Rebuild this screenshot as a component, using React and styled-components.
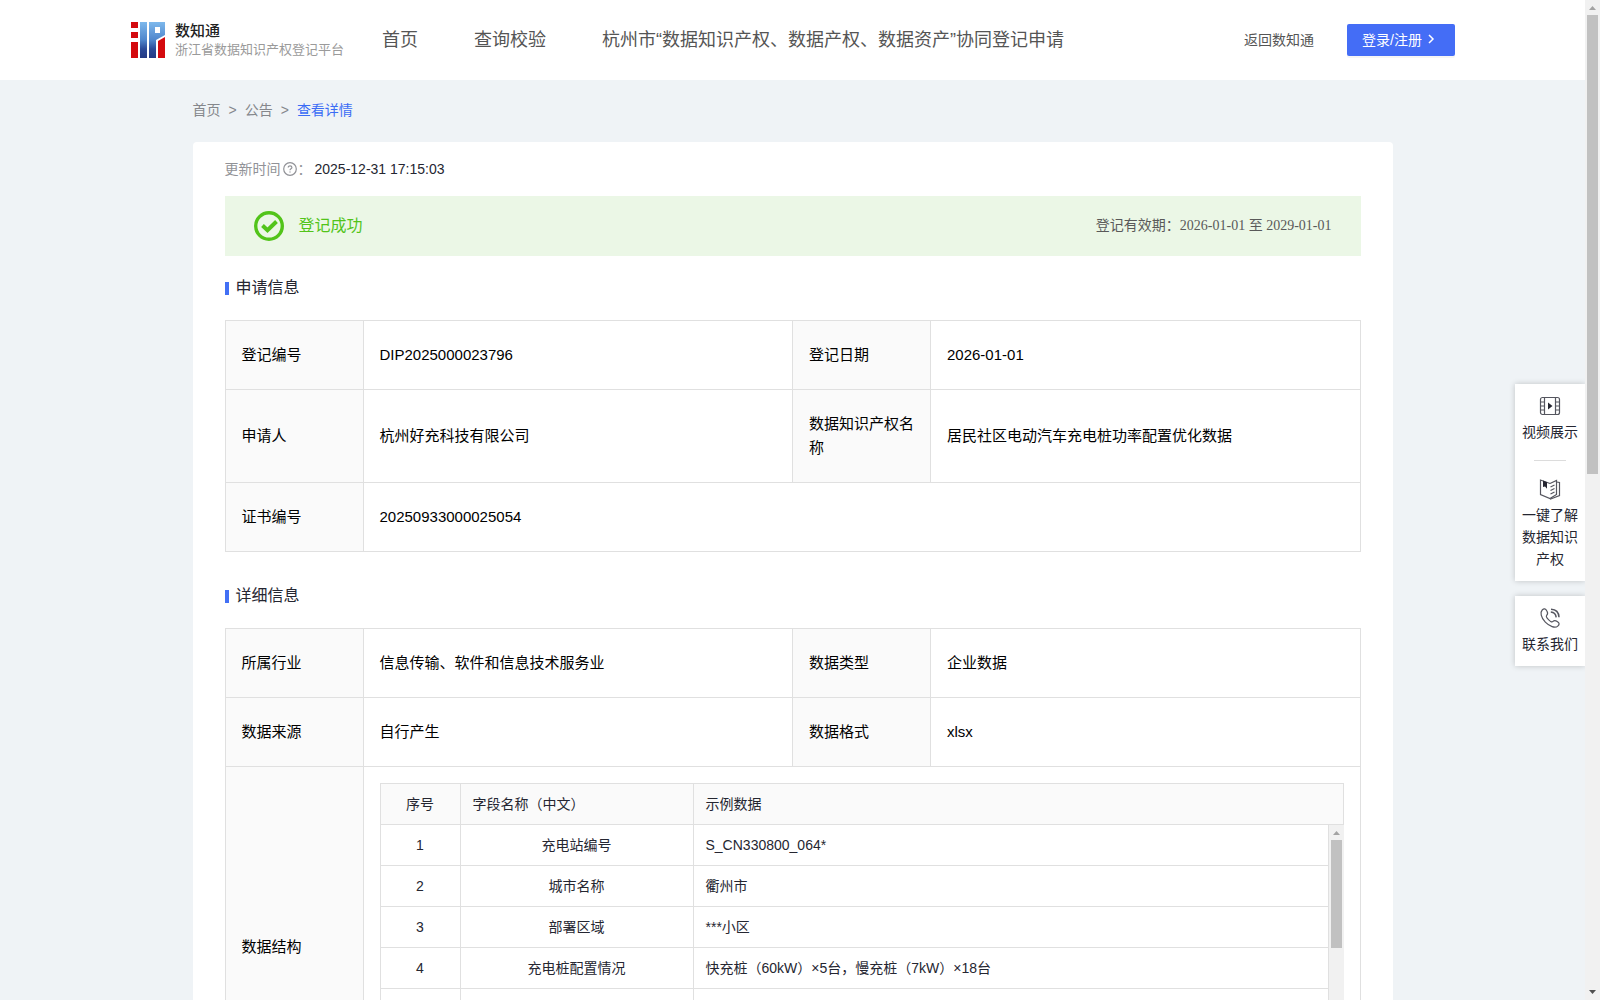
import React from 'react'
import styled, {createGlobalStyle} from 'styled-components'

const sans = `'Liberation Sans', 'Noto Sans CJK SC', sans-serif`
const serif = `'Liberation Serif', 'Noto Sans CJK SC', serif`

const GlobalStyle = createGlobalStyle`
  * {
    box-sizing: border-box;
  }

  body {
    margin: 0;
    background: #eff3f6;
    color: #252631;
    font-family: ${sans};
    font-size: 14px;
    line-height: 22px;
  }
`

const Frame = styled.div`
  position: relative;
  display: flex;
  height: 100vh;
  overflow: hidden;
`

const Page = styled.div`
  flex: 1;
  min-width: 0;
  overflow-y: auto;
  scrollbar-width: none;
`

/* scrollbar */

const Bar = styled.div`
  display: flex;
  flex-direction: column;
  flex: none;
  width: 15px;
  background: #f1f1f1;

  svg {
    display: block;
    flex: none;
  }
`

const Track = styled.div`
  flex: 1;
  padding: 0 2px;
`

const Thumb = styled.div`
  height: ${props => props.$size};
  background: #c1c1c1;
`

const Scrollbar = ({size}) => (
  <Bar aria-hidden="true">
    <svg width="15" height="15"><path d="M4 10h7L7.500 6z" fill="#a3a3a3" /></svg>
    <Track>
      <Thumb $size={size} />
    </Track>
    <svg width="15" height="15"><path d="M4 5h7L7.500 9z" fill="#505050" /></svg>
  </Bar>
)

/* header */

const Header = styled.header`
  display: flex;
  align-items: center;
  height: 80px;
  padding: 0 130px;
  background: #fff;
`

const Brand = styled.a`
  display: flex;
  align-items: center;
  gap: 9px;
  color: #9a9a9a;
  font-size: 13px;
  line-height: 19px;
  text-decoration: none;
  white-space: nowrap;

  strong {
    display: block;
    color: #222;
    font-size: 15px;
    font-weight: 500;
  }
`

const Nav = styled.nav`
  display: flex;
  flex: 1;
  gap: 56px;
  margin-left: 38px;
`

const NavLink = styled.a`
  color: #555;
  font-size: 18px;
  line-height: 24px;
  text-decoration: none;
  white-space: nowrap;
`

const BackLink = styled.a`
  margin-right: 33px;
  color: #555;
  text-decoration: none;
`

const LoginButton = styled.button`
  display: flex;
  align-items: center;
  gap: 4px;
  width: 108px;
  height: 32px;
  padding: 0 15px 2px;
  border: 0;
  border-radius: 2px;
  background: #446df6;
  box-shadow: 0 2px 0 rgba(0, 0, 0, 0.04);
  color: #fff;
  font-family: inherit;
  font-size: 14px;
  white-space: nowrap;
`

/* content */

const Main = styled.main`
  max-width: 1200px;
  margin: 0 auto;
`

const Breadcrumb = styled.nav`
  display: flex;
  gap: 8px;
  padding: 19px 0 21px;
  color: #85878c;

  a {
    color: inherit;
    text-decoration: none;
  }

  a[aria-current] {
    color: #3b6cf5;
  }
`

const Card = styled.div`
  padding: 16px 32px 32px;
  border-radius: 4px;
  background: #fff;
`

const UpdateTime = styled.div`
  display: flex;
  align-items: center;
  color: #919297;

  svg {
    margin: 0 1px 0 2px;
  }

  time {
    margin-left: 3px;
    color: #252631;
  }
`

const Banner = styled.div`
  display: flex;
  align-items: center;
  height: 60px;
  margin: 16px 0 26px;
  padding: 0 29px;
  background: #ebf7e6;
`

const Status = styled.span`
  flex: 1;
  margin-left: 15px;
  color: #52c41a;
  font-size: 16px;
`

const Validity = styled.span`
  color: #595959;
  font-family: ${serif};
`

const SectionTitle = styled.h2`
  display: flex;
  align-items: center;
  gap: 7px;
  height: 12px;
  margin: 0 0 26px;
  font-size: 16px;
  font-weight: 400;

  &::before {
    content: '';
    width: 4px;
    height: 13px;
    background: #4270f5;
  }
`

const InfoTable = styled.table`
  width: 100%;
  margin-bottom: 38px;
  border: solid #e0e0e0;
  border-width: 1px 0 0 1px;
  border-spacing: 0;
  table-layout: fixed;
  color: #000;
  font-size: 15px;
  line-height: 24px;
`

const Label = styled.th`
  width: 138px;
  padding: 22px 16px;
  border: solid #e0e0e0;
  border-width: 0 1px 1px 0;
  background: #fafafa;
  font-weight: 400;
  text-align: left;
`

const Value = styled.td`
  padding: ${props => (props.$nested ? '16px' : '22px 16px')};
  border: solid #e0e0e0;
  border-width: 0 1px 1px 0;
`

const Fields = styled.div`
  border: solid #e0e0e0;
  border-width: 1px 0 0 1px;
  color: #252631;
  font-size: 14px;
  line-height: 22px;
`

const FieldsBody = styled.div`
  display: flex;
  height: 286px;
`

const FieldsScroll = styled.div`
  flex: 1;
  min-width: 0;
  overflow: hidden;
`

const FieldTable = styled.table`
  width: 100%;
  border-spacing: 0;
  table-layout: fixed;

  th,
  td {
    height: 41px;
    padding: 0 12px;
    border: solid #e0e0e0;
    border-width: 0 1px 1px 0;
    font-weight: 400;
    text-align: left;
  }

  th {
    background: #fafafa;
  }

  th:first-child,
  td:not(:last-child) {
    text-align: center;
  }
`

/* floating tools */

const Tools = styled.aside`
  position: absolute;
  top: 384px;
  right: 15px;
  display: flex;
  flex-direction: column;
  gap: 15px;
  width: 70px;
`

const ToolBox = styled.div`
  padding: 11px 7px;
  background: #fff;
  box-shadow: 0 0 6px rgba(0, 0, 0, 0.2);
  clip-path: inset(-10px 0 -10px -10px);
`

const Tool = styled.a`
  display: flex;
  flex-direction: column;
  align-items: center;
  gap: 4px;
  color: #252631;
  text-align: center;
  text-decoration: none;
`

const Divider = styled.hr`
  width: 32px;
  height: 1px;
  margin: 17px auto;
  border: 0;
  background: #dcdcdc;
`

const Logo = () => (
  <svg width="36" height="38" viewBox="0 0 36 38">
    <defs>
      <linearGradient id="blue" x1="0" y1="0" x2="0" y2="1">
        <stop offset="0" stopColor="#7db8ec" />
        <stop offset="0.5" stopColor="#4f86cc" />
        <stop offset="0.75" stopColor="#2b4a98" />
        <stop offset="1" stopColor="#243a84" />
      </linearGradient>
    </defs>
    <path d="M1 1h7v6H1zM1 11h7v6H1zM1 21h7v16H1zM28 20l7-4v21h-7z" fill="#d40a0e" />
    <path d="M10 1h7v36h-7zM19 1h16v13l-9 5v18h-7zM25 6v6h5V6z" fill="url(#blue)" fillRule="evenodd" />
  </svg>
)

const HelpIcon = () => (
  <svg width="14" height="14" viewBox="0 0 14 14" fill="none" stroke="#919297">
    <circle cx="7" cy="7" r="6.300" strokeWidth="1.200" />
    <path d="M5.200 5.500c0-2.300 3.700-2.300 3.700 0C8.900 6.900 7 6.800 7 8.300" strokeWidth="1.200" />
    <path d="M7 9.400v1.200" strokeWidth="1.300" />
  </svg>
)

const SuccessIcon = () => (
  <svg width="30" height="30" viewBox="0 0 30 30" fill="none" stroke="#52c41a">
    <circle cx="15" cy="15" r="13.300" strokeWidth="3.400" />
    <path d="M8.500 14.500l5 4.700 9-8.700" strokeWidth="4" />
  </svg>
)

const VideoIcon = () => (
  <svg width="22" height="22" viewBox="0 0 22 22" fill="none" stroke="#55565f">
    <rect x="1.500" y="2.500" width="19" height="17" rx="2" strokeWidth="1.200" />
    <path d="M5.500 2.500v17M16.500 2.500v17M1.500 7h4M1.500 11h4M1.500 15h4M16.500 7h4M16.500 11h4M16.500 15h4" strokeWidth="1.200" />
    <path d="M9 7.500v7l4.500-3.500z" fill="#252631" stroke="none" />
  </svg>
)

const BookIcon = () => (
  <svg width="22" height="22" viewBox="0 0 22 22" fill="none" stroke="#55565f" strokeWidth="1.200">
    <path d="M11 5.500L1.500 2v14.500l9.500 4 6.500-4V2.500L11 5.500" />
    <path d="M17.500 4l3 .5v13L11 21.300M11.500 9l4-2M11.500 12.500l4-2M11.500 16l4-2" />
    <path d="M4 2.500l4 1.800v6.500L6 8.500l-2 .5z" fill="#252631" stroke="none" />
  </svg>
)

const PhoneIcon = () => (
  <svg width="22" height="22" viewBox="0 0 22 22" fill="none" stroke="#55565f" strokeWidth="1.200">
    <path d="M3.200 3C5 1.200 6.500 1.500 8 4.200c1.300 2.300.8 3-.3 4.100-1 1-.7 1.800 1.800 4.300s3.500 2.900 4.500 1.800c1.300-1.300 2-1.300 4.200.1 2.500 1.600 2.400 3 .6 4.600-2.700 2.400-8.300.4-12.500-3.900C1.800 10.700 1 5.200 3.200 3z" />
    <path d="M12 2.200c4.700.2 7.800 3.300 8 8M11.800 5c3.300.3 5 2 5.400 5.300" strokeWidth="1.500" />
  </svg>
)

const rows = [
  ['充电站编号', 'S_CN330800_064*'],
  ['城市名称', '衢州市'],
  ['部署区域', '***小区'],
  ['充电桩配置情况', '快充桩（60kW）×5台，慢充桩（7kW）×18台']
]

const FieldCols = () => (
  <colgroup>
    <col width="80" />
    <col width="233" />
    <col />
  </colgroup>
)

const InfoCols = () => (
  <colgroup>
    <col width="138" />
    <col />
    <col width="138" />
    <col />
  </colgroup>
)

const DataFields = () => (
  <Fields>
    <FieldTable>
      <FieldCols />
      <thead>
        <tr>
          <th>序号</th>
          <th>字段名称（中文）</th>
          <th>示例数据</th>
        </tr>
      </thead>
    </FieldTable>
    <FieldsBody>
      <FieldsScroll>
        <FieldTable>
          <FieldCols />
          <tbody>
            {rows.map(([name, sample], i) => (
              <tr key={name}>
                <td>{i + 1}</td>
                <td>{name}</td>
                <td>{sample}</td>
              </tr>
            ))}
            <tr>
              <td />
              <td />
              <td />
            </tr>
          </tbody>
        </FieldTable>
      </FieldsScroll>
      <Scrollbar size="42%" />
    </FieldsBody>
  </Fields>
)

const App = () => (
  <Frame>
    <GlobalStyle />
    <Page>
      <Header>
        <Brand href="#">
          <Logo />
          <span>
            <strong>数知通</strong>
            浙江省数据知识产权登记平台
          </span>
        </Brand>
        <Nav>
          <NavLink href="#">首页</NavLink>
          <NavLink href="#">查询校验</NavLink>
          <NavLink href="#">杭州市“数据知识产权、数据产权、数据资产”协同登记申请</NavLink>
        </Nav>
        <BackLink href="#">返回数知通</BackLink>
        <LoginButton type="button">
          登录/注册
          <svg width="10" height="12" viewBox="0 0 10 12" fill="none" stroke="#fff" strokeWidth="1.500">
            <path d="M3 2l4 4-4 4" />
          </svg>
        </LoginButton>
      </Header>
      <Main>
        <Breadcrumb>
          <a href="#">首页</a>
          <span>&gt;</span>
          <a href="#">公告</a>
          <span>&gt;</span>
          <a href="#" aria-current="page">查看详情</a>
        </Breadcrumb>
        <Card>
          <UpdateTime>
            更新时间<HelpIcon />：
            <time>2025-12-31 17:15:03</time>
          </UpdateTime>
          <Banner>
            <SuccessIcon />
            <Status>登记成功</Status>
            <Validity>登记有效期：2026-01-01 至 2029-01-01</Validity>
          </Banner>
          <SectionTitle>申请信息</SectionTitle>
          <InfoTable>
            <InfoCols />
            <tbody>
              <tr>
                <Label>登记编号</Label>
                <Value>DIP2025000023796</Value>
                <Label>登记日期</Label>
                <Value>2026-01-01</Value>
              </tr>
              <tr>
                <Label>申请人</Label>
                <Value>杭州好充科技有限公司</Value>
                <Label>数据知识产权名称</Label>
                <Value>居民社区电动汽车充电桩功率配置优化数据</Value>
              </tr>
              <tr>
                <Label>证书编号</Label>
                <Value colSpan={3}>20250933000025054</Value>
              </tr>
            </tbody>
          </InfoTable>
          <SectionTitle>详细信息</SectionTitle>
          <InfoTable>
            <InfoCols />
            <tbody>
              <tr>
                <Label>所属行业</Label>
                <Value>信息传输、软件和信息技术服务业</Value>
                <Label>数据类型</Label>
                <Value>企业数据</Value>
              </tr>
              <tr>
                <Label>数据来源</Label>
                <Value>自行产生</Value>
                <Label>数据格式</Label>
                <Value>xlsx</Value>
              </tr>
              <tr>
                <Label>数据结构</Label>
                <Value colSpan={3} $nested>
                  <DataFields />
                </Value>
              </tr>
            </tbody>
          </InfoTable>
        </Card>
      </Main>
    </Page>
    <Tools>
      <ToolBox>
        <Tool href="#"><VideoIcon />视频展示</Tool>
        <Divider />
        <Tool href="#"><BookIcon />一键了解数据知识产权</Tool>
      </ToolBox>
      <ToolBox>
        <Tool href="#"><PhoneIcon />联系我们</Tool>
      </ToolBox>
    </Tools>
    <Scrollbar size="47.300%" />
  </Frame>
)

export default App
